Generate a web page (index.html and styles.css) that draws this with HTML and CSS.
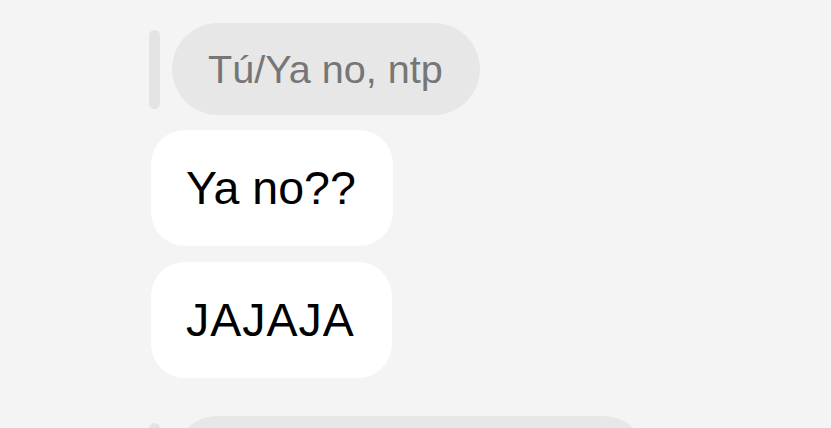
FILE: index.html
```html
<!DOCTYPE html>
<html lang="es">
<head>
<meta charset="utf-8">
<link rel="stylesheet" href="styles.css">
</head>
<body>
<div class="thread">
  <div class="reply">
    <div class="reply-bar"></div>
    <div class="reply-bubble">Tú/Ya no, ntp</div>
  </div>
  <div class="bubble">Ya no??</div>
  <div class="bubble bubble-caps">JAJAJA</div>
  <div class="reply reply-next">
    <div class="reply-bar"></div>
    <div class="reply-bubble reply-wide">&nbsp;</div>
  </div>
</div>
</body>
</html>
```
FILE: styles.css
```css
html, body {
  margin: 0;
  padding: 0;
  background: #f4f4f4;
  overflow: hidden;
}
body {
  width: 831px;
  height: 428px;
  font-family: "Liberation Sans", Arial, sans-serif;
}
.thread {
  height: 428px;
  box-sizing: border-box;
  overflow: hidden;
  display: flex;
  flex-direction: column;
  align-items: flex-start;
  padding: 23px 0 0 149px;
}
.reply {
  display: flex;
  align-items: stretch;
  gap: 12px;
  flex-shrink: 0;
}
.reply-bar {
  width: 11px;
  margin: 7px 0 6px;
  border-radius: 6px;
  background: #e4e4e4;
}
.reply-bubble {
  height: 92px;
  box-sizing: border-box;
  display: flex;
  align-items: center;
  padding: 0 37px 0 36px;
  border-radius: 46px;
  background: #e7e7e7;
  color: #767676;
  font-size: 39.6px;
  white-space: nowrap;
}
.reply-wide {
  width: 477px;
}
.bubble {
  flex-shrink: 0;
  margin-left: 2px;
  margin-top: 15px;
  height: 116px;
  box-sizing: border-box;
  display: flex;
  align-items: center;
  padding: 0 37px 0 35px;
  border-radius: 34px;
  background: #ffffff;
  color: #000000;
  font-size: 46.5px;
  white-space: nowrap;
}
.bubble + .bubble {
  margin-top: 16px;
}
.bubble-caps {
  letter-spacing: 1px;
}
.reply-next {
  margin-top: 38px;
}
```
